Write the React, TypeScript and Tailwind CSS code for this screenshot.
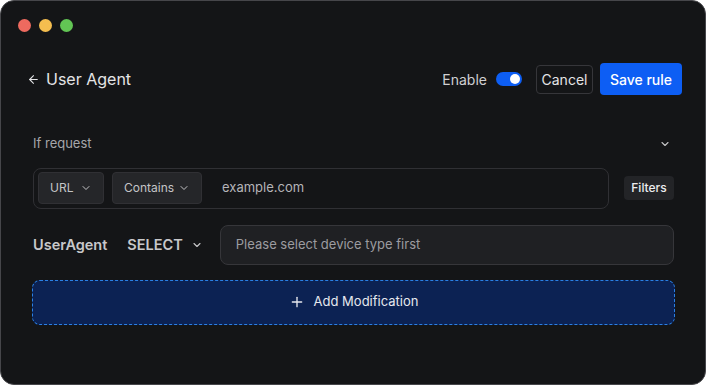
import { ArrowLeft, ChevronDown, Plus } from "lucide-react";

function Select({ label, width }: { label: string; width: string }) {
  return (
    <div
      className={`flex h-[32px] ${width} items-center justify-between rounded-[4px] border border-[#303034] bg-[#252629] pl-[11px] pr-[11px] text-[12px] text-[#c4c4c6]`}
    >
      <span>{label}</span>
      <ChevronDown size={12} strokeWidth={2} className="text-[#c4c4c6]" />
    </div>
  );
}

export default function App() {
  return (
    <div className="h-[385px] w-[706px] bg-white" style={{ fontFamily: "Inter, 'Noto Sans', sans-serif" }}>
      <div className="flex h-[385px] w-[706px] flex-col rounded-[14px] border border-[#46464a] bg-[#141517]">
        {/* traffic lights */}
        <div className="flex gap-[8px] pl-[17px] pt-[18px]">
          <span className="h-[13px] w-[13px] rounded-full bg-[#ee6a5f]" />
          <span className="h-[13px] w-[13px] rounded-full bg-[#f5be4f]" />
          <span className="h-[13px] w-[13px] rounded-full bg-[#62c554]" />
        </div>

        {/* header */}
        <div className="mt-[31px] flex items-center justify-between pl-[26px] pr-[23px]">
          <div className="flex items-center gap-[6px] text-[#e4e4e6]">
            <ArrowLeft size={13} strokeWidth={2} />
            <span className="text-[16px]">User Agent</span>
          </div>
          <div className="flex items-center">
            <span className="text-[14px] text-[#d0d0d2]">Enable</span>
            <div className="ml-[9px] flex h-[14px] w-[26px] items-center justify-end rounded-full bg-[#0d5ef4] pr-[2px]">
              <span className="h-[10px] w-[10px] rounded-full bg-white" />
            </div>
            <button className="ml-[14px] flex h-[29px] w-[57px] items-center justify-center rounded-[4px] border border-[#36363a] bg-[#141517] text-[14px] text-[#e4e4e6]">
              Cancel
            </button>
            <button className="ml-[7px] flex h-[32px] w-[82px] items-center justify-center rounded-[4px] bg-[#0d5ef4] text-[14px] font-medium text-white">
              Save rule
            </button>
          </div>
        </div>

        {/* if request */}
        <div className="mt-[39px] flex items-center justify-between pl-[32px] pr-[34px]">
          <span className="text-[13px] text-[#a6a6aa]">If request</span>
          <ChevronDown size={12} strokeWidth={2.2} className="text-[#c4c4c6]" />
        </div>

        <div className="mt-[14px] flex items-center pl-[32px] pr-[31px]">
          <div className="flex h-[41px] w-[576px] items-center gap-[8px] rounded-[8px] border border-[#303034] pl-[4px]">
            <Select label="URL" width="w-[66px]" />
            <Select label="Contains" width="w-[90px]" />
            <span className="ml-[12px] text-[13px] text-[#b4b4b8]">example.com</span>
          </div>
          <button className="ml-auto flex h-[24px] w-[50px] items-center justify-center rounded-[4px] bg-[#232427] text-[12px] font-medium text-[#ececee]">
            Filters
          </button>
        </div>

        {/* user agent */}
        <div className="mt-[16px] flex items-center pl-[32px] pr-[31px]">
          <span className="text-[14.5px] font-semibold text-[#c8c8ca]">UserAgent</span>
          <span className="ml-[20px] text-[14.5px] font-semibold text-[#c8c8ca]">SELECT</span>
          <ChevronDown size={12} strokeWidth={2.2} className="ml-[8px] text-[#c8c8ca]" />
          <div className="ml-[17px] flex h-[40px] flex-1 items-center rounded-[8px] border border-[#36363a] bg-[#1f2023] pl-[15px] text-[13px] text-[#9c9ca0]">
            Please select device type first
          </div>
        </div>

        {/* add modification */}
        <div className="mt-[15px] pl-[31px] pr-[30px]">
          <button className="flex h-[45px] w-full items-center justify-center gap-[9px] rounded-[8px] border border-dashed border-[#2a80e6] bg-[#0c2253] text-[13px] text-[#e6e8ee]">
            <Plus size={16} strokeWidth={2} />
            Add Modification
          </button>
        </div>
      </div>
    </div>
  );
}
